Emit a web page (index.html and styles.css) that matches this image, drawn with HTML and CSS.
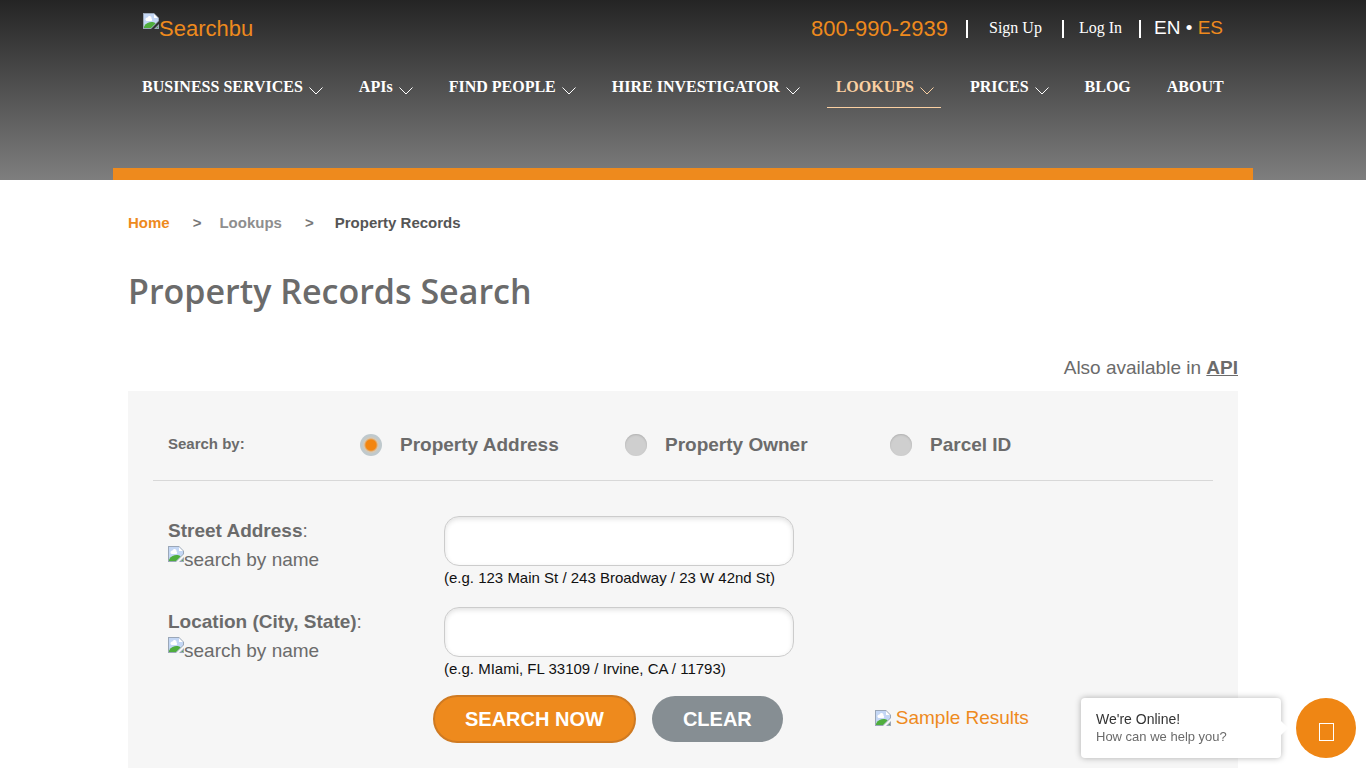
FILE: index.html
```html
<!DOCTYPE html>
<html lang="en">

<head>
  <meta charset="UTF-8">
  <meta name="viewport" content="width=device-width, initial-scale=1.0">
  <title>Property Records Search</title>
  <link rel="stylesheet" href="styles.css">
</head>

<body>
  <svg class="sprite" aria-hidden="true">
    <symbol id="picture" viewBox="0 0 16 16">
      <path d="M0 0h11l5 5v3L8 16H0z" fill="#9aa7b8"/>
      <path d="M1 1h10v4h4v3l-7 7H1z" fill="#c4d7f5"/>
      <path d="M2.500 7a2 2 0 0 1 2-2.500 2 2 0 0 1 4 1 1.500 1.500 0 0 1 0 2.500H3.500z" fill="#fff"/>
      <path d="M1 15v-1.500c2-3.500 5-4.500 7.500-4.500 2 0 3.500.5 4 1.500l-4.500 4.500z" fill="#4fae3d"/>
      <path d="M11 1v4h4z" fill="#fff"/>
      <path d="M16 11v5h-5z" fill="#9aa7b8"/>
      <path d="M15 13.500V15h-1.500z" fill="#4fae3d"/>
    </symbol>
    <symbol id="arrow" viewBox="0 0 14 8">
      <path d="M.5.5L7 7l6.500-6.500" fill="none" stroke="currentColor"/>
    </symbol>
  </svg>

  <header class="header">
    <div class="container header-inner">
      <div class="top-row">
        <a href="#" class="logo"><svg class="picture"><use href="#picture"/></svg><span>Searchbu</span></a>
        <div class="top-links">
          <a href="tel:8009902939" class="phone">800-990-2939</a>
          <span class="sep"></span>
          <a href="#" class="signup">Sign Up</a>
          <span class="sep"></span>
          <a href="#" class="login">Log In</a>
          <span class="sep"></span>
          <span class="lang">EN • <a href="#">ES</a></span>
        </div>
      </div>
      <nav class="nav">
        <a href="#">BUSINESS SERVICES<svg class="arrow"><use href="#arrow"/></svg></a>
        <a href="#">APIs<svg class="arrow"><use href="#arrow"/></svg></a>
        <a href="#">FIND PEOPLE<svg class="arrow"><use href="#arrow"/></svg></a>
        <a href="#">HIRE INVESTIGATOR<svg class="arrow"><use href="#arrow"/></svg></a>
        <a href="#" class="active">LOOKUPS<svg class="arrow"><use href="#arrow"/></svg></a>
        <a href="#">PRICES<svg class="arrow"><use href="#arrow"/></svg></a>
        <a href="#">BLOG</a>
        <a href="#">ABOUT</a>
      </nav>
    </div>
  </header>

  <main class="container content">
    <nav class="breadcrumb">
      <a href="#" class="home">Home</a>
      <span class="gt">&gt;</span>
      <a href="#">Lookups</a>
      <span class="gt last">&gt;</span>
      <span class="current">Property Records</span>
    </nav>

    <h1>Property Records Search</h1>
    <p class="also">Also available in <a href="#">API</a></p>

    <form class="search-box">
      <div class="search-by">
        <span class="search-by-title">Search by:</span>
        <label><input type="radio" name="type" checked>Property Address</label>
        <label><input type="radio" name="type">Property Owner</label>
        <label><input type="radio" name="type">Parcel ID</label>
      </div>

      <div class="field">
        <label for="street"><span><b>Street Address</b>:</span>
          <span class="alt"><svg class="picture"><use href="#picture"/></svg>search by name</span></label>
        <div class="field-input">
          <input type="text" id="street">
          <small>(e.g. 123 Main St / 243 Broadway / 23 W 42nd St)</small>
        </div>
      </div>

      <div class="field">
        <label for="location"><span><b>Location (City, State)</b>:</span>
          <span class="alt"><svg class="picture"><use href="#picture"/></svg>search by name</span></label>
        <div class="field-input">
          <input type="text" id="location">
          <small>(e.g. MIami, FL 33109 / Irvine, CA / 11793)</small>
        </div>
      </div>

      <div class="actions">
        <button type="submit" class="btn-search">SEARCH NOW</button>
        <button type="reset" class="btn-clear">CLEAR</button>
        <a href="#" class="sample"><svg class="picture"><use href="#picture"/></svg>Sample Results</a>
      </div>
    </form>
  </main>

  <div class="chat">
    <div class="chat-bubble">
      <p class="chat-title">We're Online!</p>
      <p>How can we help you?</p>
    </div>
    <button type="button" class="chat-button" aria-label="Open chat"><span class="chat-icon"></span></button>
  </div>
</body>

</html>
```
FILE: styles.css
```css
:root {
  --orange: #ee8a1d;
  --gray: #6b6b6b;
  --box: #f6f6f6;
}

*,*::before,*::after { box-sizing: border-box; }

body {
  margin: 0;
  font-family: "Liberation Sans", Arial, sans-serif;
  font-size: 19px;
  color: var(--gray);
  background: #fff;
  height: 100vh;
  overflow: hidden;
}

a { color: var(--orange); text-decoration: none; }
p { margin: 0; }

.sprite { display: none; }

.picture {
  width: 16px;
  height: 16px;
  flex: none;
}

.container {
  width: 100%;
  max-width: 1140px;
  margin: 0 auto;
}

/* header */
.header {
  background: linear-gradient(#242424, #7e7e7e);
}

.header-inner {
  height: 180px;
  border-bottom: 12px solid var(--orange);
  padding: 12px 20px 0;
}

.top-row {
  display: flex;
  justify-content: space-between;
  align-items: flex-start;
  padding: 0 10px;
}

.logo {
  display: flex;
  font-size: 22px;
  line-height: 34px;
}

.logo .picture { margin-top: 1px; }

.top-links {
  display: flex;
  align-items: center;
  height: 34px;
  color: #fff;
}

.top-links .signup,
.top-links .login {
  padding-bottom: 2px;
  font-family: "Liberation Serif", "Times New Roman", serif;
  font-size: 16px;
  color: #fff;
}

.phone { font-size: 22px; }
.signup { margin: 0 20px 0 21px; }
.login { margin: 0 17px 0 15px; }
.lang { margin-left: 13px; padding-bottom: 3px; }
.phone + .sep { margin-left: 18px; }

.sep {
  width: 2px;
  height: 18px;
  background: #fff;
}

.nav {
  display: flex;
  gap: 20px;
  margin-top: 24px;
  font-family: "Liberation Serif", "Times New Roman", serif;
  font-size: 16px;
  font-weight: bold;
  white-space: nowrap;
}

.nav a {
  display: flex;
  align-items: center;
  height: 38px;
  padding: 0 7px 4px 9px;
  color: #fff;
  border-bottom: 1px solid transparent;
}

.nav a.active {
  color: #fbd0a2;
  border-color: #fbd0a2;
}

.arrow {
  width: 14px;
  height: 8px;
  margin: 8px 0 0 6px;
}

/* content */
.content { padding: 0 15px; }

.breadcrumb {
  display: flex;
  padding-top: 34px;
  font-size: 15px;
  font-weight: bold;
  line-height: 18px;
  color: #777;
}

.breadcrumb a { color: #8e8e8e; }
.breadcrumb a.home { color: var(--orange); }
.breadcrumb .current { color: #555; }
.gt { margin: 0 18px 0 23px; }
.gt.last { margin-right: 21px; }

h1 {
  margin: 34px 0 0;
  font-family: "Open Sans", "Segoe UI", sans-serif;
  font-size: 34px;
  font-weight: 600;
  line-height: 50px;
}

.also {
  margin-top: 41px;
  text-align: right;
  line-height: 22px;
}

.also a {
  color: var(--gray);
  font-weight: bold;
  text-decoration: underline;
}

.search-box {
  margin-top: 12px;
  padding: 28px 25px 60px;
  background: var(--box);
}

.search-by {
  display: flex;
  align-items: center;
  height: 62px;
  padding: 0 15px 10px;
  border-bottom: 1px solid #d8d8d8;
  font-weight: bold;
}

.search-by-title {
  width: 192px;
  padding-bottom: 3px;
  font-size: 15px;
}

.search-by label {
  display: flex;
  align-items: center;
  gap: 18px;
  width: 265px;
}

.search-by input {
  appearance: none;
  width: 22px;
  height: 22px;
  margin: 0;
  border-radius: 50%;
  background: #cfcfcf;
  box-shadow: inset 0 1px 2px #b0b0b0;
}

.search-by input:checked {
  background: radial-gradient(circle, #f3850f 5px, #d6c8b4 7px, #bfc9cd 9px);
  box-shadow: none;
}

.field {
  display: flex;
  margin-top: 19px;
  padding-left: 15px;
}

.search-by + .field { margin-top: 35px; }

.field label {
  width: 276px;
  padding-top: 4px;
  line-height: 22px;
}

.alt {
  display: flex;
  line-height: 36px;
}

.alt .picture { margin-top: 4px; }

.field-input {
  display: flex;
  flex-direction: column;
  width: 350px;
}

.field-input input {
  height: 50px;
  padding: 0 16px;
  border: 1px solid #ccc;
  border-radius: 15px;
  background: #fff;
  box-shadow: inset 0 2px 5px rgba(0,0,0,.12);
  font: inherit;
}

.field-input small {
  padding-top: 2px;
  font-size: 15px;
  line-height: 20px;
  color: #111;
  white-space: nowrap;
}

.actions {
  display: flex;
  align-items: center;
  margin-top: 16px;
  padding-left: 280px;
}

.actions button {
  border: none;
  border-radius: 24px;
  color: #fff;
  font-family: inherit;
  font-size: 20px;
  font-weight: bold;
  cursor: pointer;
}

.actions .btn-search {
  height: 48px;
  padding: 0 30px;
  border: 2px solid #cf7a22;
  background: var(--orange);
}

.actions .btn-clear {
  height: 46px;
  margin-left: 16px;
  padding: 0 31px;
  background: #868e93;
}

.sample {
  display: flex;
  align-items: center;
  gap: 5px;
  margin-left: 92px;
  padding-bottom: 3px;
}

/* chat widget */
.chat {
  position: fixed;
  right: 10px;
  bottom: 10px;
  display: flex;
  align-items: center;
  gap: 15px;
}

.chat-bubble {
  position: relative;
  width: 200px;
  height: 60px;
  padding: 12px 15px;
  border-radius: 4px;
  background: #fff;
  box-shadow: 0 0 6px rgba(0,0,0,.3);
  font-size: 13px;
  line-height: 18px;
}

.chat-bubble::after {
  content: "";
  position: absolute;
  top: 25px;
  right: -5px;
  width: 10px;
  height: 10px;
  background: #fff;
  transform: rotate(45deg);
}

.chat-title {
  font-size: 14px;
  color: #333;
}

.chat-button {
  display: flex;
  align-items: center;
  justify-content: center;
  width: 60px;
  height: 60px;
  padding: 7px 0 0;
  border: none;
  border-radius: 50%;
  background: #ef8614;
}

.chat-icon {
  width: 15px;
  height: 18px;
  border: 1px solid #fff;
}
```
